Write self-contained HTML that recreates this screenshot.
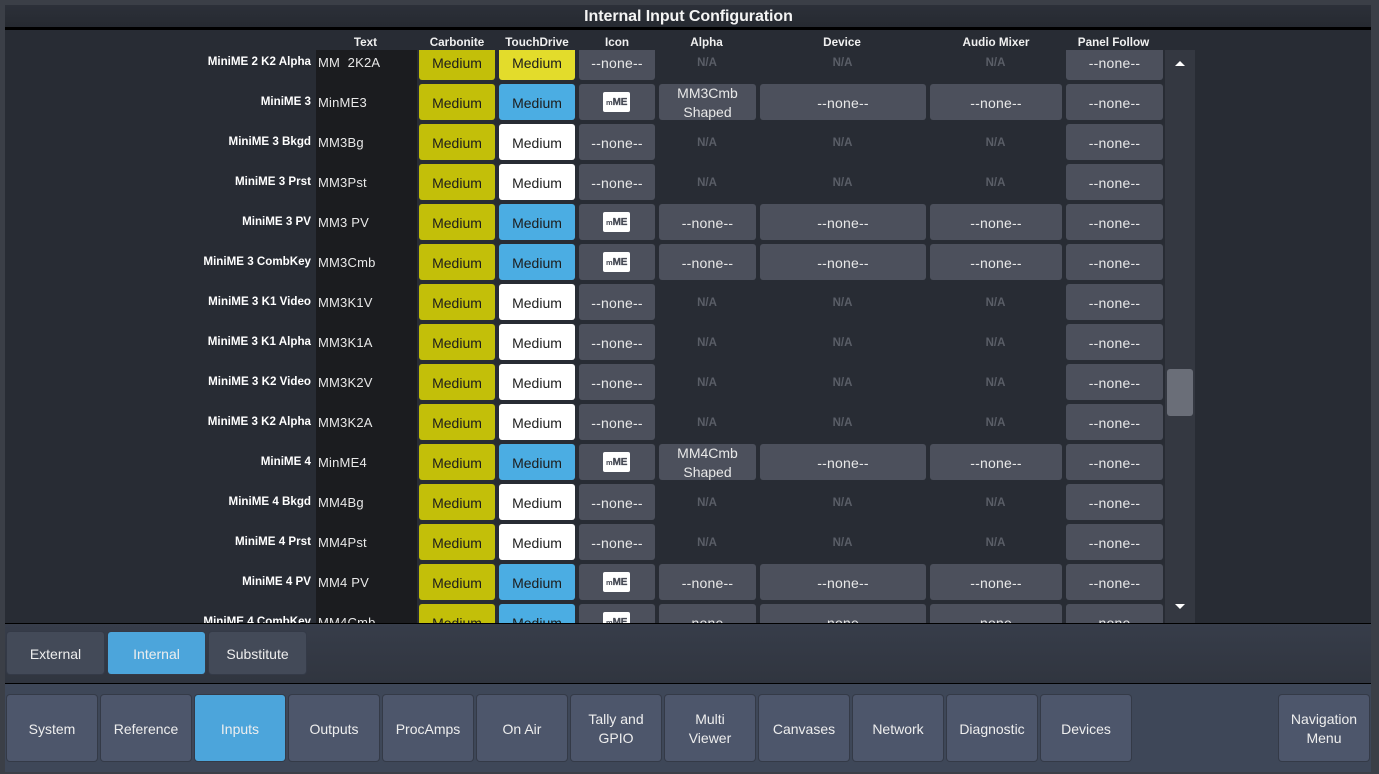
<!DOCTYPE html>
<html><head><meta charset="utf-8"><title>Internal Input Configuration</title>
<style>
html,body{margin:0;padding:0;width:1379px;height:774px;overflow:hidden;background:#3b3f47;font-family:"Liberation Sans",sans-serif}
div{box-sizing:border-box}
.a{position:absolute}
#title{left:5px;top:5px;width:1366px;height:22px;background:linear-gradient(#2c3039,#262a31);color:#f4f4f4;font:bold 16px/24px "Liberation Sans",sans-serif;text-align:center;letter-spacing:-.07px;padding-left:1px}
#tl{left:5px;top:27px;width:1366px;height:3px;background:#000}
#main{left:5px;top:30px;width:1366px;height:593px;background:#282c34}
.h{position:absolute;top:36px;height:14px;font:bold 11.7px/14px "Liberation Sans",sans-serif;color:#f0f0f0;text-align:center}
#black{left:316px;top:50px;width:101px;height:573px;background:#1b1c1f}
#clip{left:0;top:50px;width:1379px;height:573px;overflow:hidden}
.r{position:absolute;left:0;width:1379px;height:36px}
.l{position:absolute;left:100px;width:211px;top:11px;text-align:right;font:bold 11.6px/14px "Liberation Sans",sans-serif;color:#fff}
.t{position:absolute;left:318px;top:11px;font:13px/16px "Liberation Sans",sans-serif;letter-spacing:.2px;color:#e8e8e8;white-space:pre}
.b{position:absolute;top:0;height:36px;border-radius:3px;text-align:center;font:14px/38px "Liberation Sans",sans-serif;color:#e8e8e8;background:#4c505c;letter-spacing:.2px}
.c{left:419px;width:76px;background:#c3bf09;color:#1c1c1c;letter-spacing:0}
.d{left:499px;width:76px;color:#1c1c1c;letter-spacing:0}
.w{background:#fff}.u{background:#4bade3}.y{background:#e3dc2b}
.i{left:579px;width:76px}
.al{left:659px;width:97px}
.de{left:760px;width:166px}
.au{left:930px;width:132px}
.p{left:1066px;width:97px}
.two{line-height:19px;white-space:pre-line;letter-spacing:0}
.n{position:absolute;top:12px;font:bold 11.5px/14px "Liberation Sans",sans-serif;color:#5a5e67;text-align:center;padding-right:1px}
.n1{left:659px;width:97px}.n2{left:760px;width:166px}.n3{left:930px;width:132px}
.ic{position:absolute;left:24px;top:8px;width:27px;height:20px;background:#fff;border-radius:2px;color:#454954;font:bold 10px/21px "Liberation Sans",sans-serif;letter-spacing:-.2px;text-align:left;padding-left:3px;-webkit-text-stroke:.3px #454954;overflow:hidden;white-space:nowrap}
.ic small{font-size:7.5px;letter-spacing:0;-webkit-text-stroke:0}
#sb{left:1165px;top:50px;width:30px;height:573px;background:#343841}
#th{left:1167px;top:369px;width:26px;height:47px;background:#6a6e78;border-radius:3px}
#l1{left:5px;top:623px;width:1366px;height:1px;background:#000}
#sub{left:5px;top:624px;width:1366px;height:59px;background:linear-gradient(#373d4a,#30353f)}
#l2{left:5px;top:683px;width:1366px;height:1px;background:#000}
#bot{left:5px;top:684px;width:1366px;height:88px;background:#3e4758}
.s,.m{position:absolute;text-align:center;color:#eee;border-radius:3px;font:14px "Liberation Sans",sans-serif;letter-spacing:0;box-shadow:0 0 0 1px #343a47}
.s{top:632px;height:42px;line-height:44px;background:#434a58}
.m{top:695px;width:90px;height:66px;line-height:68px;background:#4d566b}
.m.two{line-height:19px;padding-top:15px}
.on{background:#4ca5db}
</style></head><body>
<div class="a" id="title">Internal Input Configuration</div>
<div class="a" id="tl"></div>
<div class="a" id="main"></div>
<div class="a" id="black"></div>
<div class="h" style="left:315px;width:101px">Text</div>
<div class="h" style="left:419px;width:76px">Carbonite</div>
<div class="h" style="left:499px;width:76px">TouchDrive</div>
<div class="h" style="left:579px;width:76px">Icon</div>
<div class="h" style="left:658px;width:97px">Alpha</div>
<div class="h" style="left:759px;width:166px">Device</div>
<div class="h" style="left:930px;width:132px">Audio Mixer</div>
<div class="h" style="left:1065px;width:97px">Panel Follow</div>
<div class="a" id="clip">
<div class="r" style="top:-6px"><div class="l">MiniME 2 K2 Alpha</div><div class="t">MM  2K2A</div><div class="b c">Medium</div><div class="b d y">Medium</div><div class="b i">--none--</div><div class="n n1">N/A</div><div class="n n2">N/A</div><div class="n n3">N/A</div><div class="b p">--none--</div></div>
<div class="r" style="top:34px"><div class="l">MiniME 3</div><div class="t">MinME3</div><div class="b c">Medium</div><div class="b d u">Medium</div><div class="b i"><div class="ic"><small>m</small>ME</div></div><div class="b al two">MM3Cmb
Shaped</div><div class="b de">--none--</div><div class="b au">--none--</div><div class="b p">--none--</div></div>
<div class="r" style="top:74px"><div class="l">MiniME 3 Bkgd</div><div class="t">MM3Bg</div><div class="b c">Medium</div><div class="b d w">Medium</div><div class="b i">--none--</div><div class="n n1">N/A</div><div class="n n2">N/A</div><div class="n n3">N/A</div><div class="b p">--none--</div></div>
<div class="r" style="top:114px"><div class="l">MiniME 3 Prst</div><div class="t">MM3Pst</div><div class="b c">Medium</div><div class="b d w">Medium</div><div class="b i">--none--</div><div class="n n1">N/A</div><div class="n n2">N/A</div><div class="n n3">N/A</div><div class="b p">--none--</div></div>
<div class="r" style="top:154px"><div class="l">MiniME 3 PV</div><div class="t">MM3 PV</div><div class="b c">Medium</div><div class="b d u">Medium</div><div class="b i"><div class="ic"><small>m</small>ME</div></div><div class="b al">--none--</div><div class="b de">--none--</div><div class="b au">--none--</div><div class="b p">--none--</div></div>
<div class="r" style="top:194px"><div class="l">MiniME 3 CombKey</div><div class="t">MM3Cmb</div><div class="b c">Medium</div><div class="b d u">Medium</div><div class="b i"><div class="ic"><small>m</small>ME</div></div><div class="b al">--none--</div><div class="b de">--none--</div><div class="b au">--none--</div><div class="b p">--none--</div></div>
<div class="r" style="top:234px"><div class="l">MiniME 3 K1 Video</div><div class="t">MM3K1V</div><div class="b c">Medium</div><div class="b d w">Medium</div><div class="b i">--none--</div><div class="n n1">N/A</div><div class="n n2">N/A</div><div class="n n3">N/A</div><div class="b p">--none--</div></div>
<div class="r" style="top:274px"><div class="l">MiniME 3 K1 Alpha</div><div class="t">MM3K1A</div><div class="b c">Medium</div><div class="b d w">Medium</div><div class="b i">--none--</div><div class="n n1">N/A</div><div class="n n2">N/A</div><div class="n n3">N/A</div><div class="b p">--none--</div></div>
<div class="r" style="top:314px"><div class="l">MiniME 3 K2 Video</div><div class="t">MM3K2V</div><div class="b c">Medium</div><div class="b d w">Medium</div><div class="b i">--none--</div><div class="n n1">N/A</div><div class="n n2">N/A</div><div class="n n3">N/A</div><div class="b p">--none--</div></div>
<div class="r" style="top:354px"><div class="l">MiniME 3 K2 Alpha</div><div class="t">MM3K2A</div><div class="b c">Medium</div><div class="b d w">Medium</div><div class="b i">--none--</div><div class="n n1">N/A</div><div class="n n2">N/A</div><div class="n n3">N/A</div><div class="b p">--none--</div></div>
<div class="r" style="top:394px"><div class="l">MiniME 4</div><div class="t">MinME4</div><div class="b c">Medium</div><div class="b d u">Medium</div><div class="b i"><div class="ic"><small>m</small>ME</div></div><div class="b al two">MM4Cmb
Shaped</div><div class="b de">--none--</div><div class="b au">--none--</div><div class="b p">--none--</div></div>
<div class="r" style="top:434px"><div class="l">MiniME 4 Bkgd</div><div class="t">MM4Bg</div><div class="b c">Medium</div><div class="b d w">Medium</div><div class="b i">--none--</div><div class="n n1">N/A</div><div class="n n2">N/A</div><div class="n n3">N/A</div><div class="b p">--none--</div></div>
<div class="r" style="top:474px"><div class="l">MiniME 4 Prst</div><div class="t">MM4Pst</div><div class="b c">Medium</div><div class="b d w">Medium</div><div class="b i">--none--</div><div class="n n1">N/A</div><div class="n n2">N/A</div><div class="n n3">N/A</div><div class="b p">--none--</div></div>
<div class="r" style="top:514px"><div class="l">MiniME 4 PV</div><div class="t">MM4 PV</div><div class="b c">Medium</div><div class="b d u">Medium</div><div class="b i"><div class="ic"><small>m</small>ME</div></div><div class="b al">--none--</div><div class="b de">--none--</div><div class="b au">--none--</div><div class="b p">--none--</div></div>
<div class="r" style="top:554px"><div class="l">MiniME 4 CombKey</div><div class="t">MM4Cmb</div><div class="b c">Medium</div><div class="b d u">Medium</div><div class="b i"><div class="ic"><small>m</small>ME</div></div><div class="b al">--none--</div><div class="b de">--none--</div><div class="b au">--none--</div><div class="b p">--none--</div></div>
</div>
<div class="a" id="sb"></div>
<div class="a" id="th"></div>
<svg class="a" style="left:1174px;top:60px" width="12" height="7"><path d="M1 6 L6 1 L11 6 Z" fill="#fff"/></svg>
<svg class="a" style="left:1174px;top:603px" width="12" height="7"><path d="M1 1 L11 1 L6 6 Z" fill="#fff"/></svg>
<div class="a" id="l1"></div>
<div class="a" id="sub"></div>
<div class="a" id="l2"></div>
<div class="a" id="bot"></div>
<div class="s" style="left:7px;width:97px">External</div>
<div class="s on" style="left:108px;width:97px">Internal</div>
<div class="s" style="left:209px;width:97px">Substitute</div>
<div class="m" style="left:7px">System</div>
<div class="m" style="left:101px">Reference</div>
<div class="m on" style="left:195px">Inputs</div>
<div class="m" style="left:289px">Outputs</div>
<div class="m" style="left:383px">ProcAmps</div>
<div class="m" style="left:477px">On Air</div>
<div class="m two" style="left:571px">Tally and<br>GPIO</div>
<div class="m two" style="left:665px">Multi<br>Viewer</div>
<div class="m" style="left:759px">Canvases</div>
<div class="m" style="left:853px">Network</div>
<div class="m" style="left:947px">Diagnostic</div>
<div class="m" style="left:1041px">Devices</div>
<div class="m two" style="left:1279px">Navigation<br>Menu</div>
</body></html>
